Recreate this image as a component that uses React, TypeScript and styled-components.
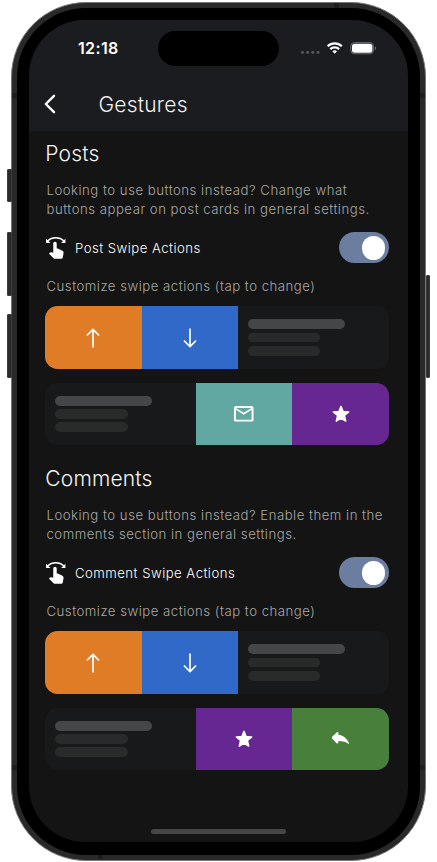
import React from "react";
import styled, { createGlobalStyle } from "styled-components";
import { MdMailOutline } from "react-icons/md";

const GlobalStyle = createGlobalStyle`
  * { box-sizing: border-box; }
  body { margin: 0; background: #fff; font-family: Inter, "Liberation Sans", sans-serif; overflow: hidden; }
`;

const Stage = styled.div`
  width: 437px;
  height: 862px;
  padding: 2px 0 0 11px;
`;

const Phone = styled.div`
  position: relative;
  width: 415px;
  height: 858.5px;
  padding: 5px;
  border: 1px solid #777;
  border-radius: 75px;
  background: #292929;
`;

const SideKey = styled.span<{ $right?: boolean; $top: number; $h: number }>`
  position: absolute;
  ${(p) => (p.$right ? "right: -5px" : "left: -5px")};
  top: ${(p) => p.$top}px;
  width: 4.5px;
  height: ${(p) => p.$h}px;
  background: #2b2b2b;
  border: 1px solid #3b3b3b;
  border-radius: 1px;
`;

const Antenna = styled.span<{ $x: number; $y: number; $flat?: boolean }>`
  position: absolute;
  left: ${(p) => p.$x}px;
  top: ${(p) => p.$y}px;
  width: ${(p) => (p.$flat ? 5 : 6)}px;
  height: 5px;
  background: #1d1d1d;
`;

const Bezel = styled.div`
  position: relative;
  height: 100%;
  padding: 12px;
  border-radius: 69px;
  background: #000;
`;

const Screen = styled.main`
  display: flex;
  flex-direction: column;
  height: 822px;
  border-radius: 56px;
  overflow: hidden;
  background: #141414;
`;

const Header = styled.header`
  height: 110.5px;
  flex: none;
  background: #1b1c1f;
`;

const StatusBar = styled.div`
  display: grid;
  grid-template-columns: 129.3px 120.5px 1fr;
  height: 57px;
  padding-top: 11px;
`;

const Clock = styled.time`
  padding-left: 49px;
  font-size: 16px;
  font-weight: 580;
  letter-spacing: 0.35px;
  line-height: 35px;
  color: #fff;
`;

const Island = styled.div`
  height: 35px;
  border-radius: 18px;
  background: #000;
`;

const Indicators = styled.svg`
  width: 80px;
  height: 16px;
  margin: 9px 0 0 21px;
`;

const NavBar = styled.nav`
  display: flex;
  align-items: center;
  height: 54px;
`;

const BackButton = styled.button`
  display: flex;
  width: 69.5px;
  padding: 0 0 0 14px;
  border: 0;
  background: none;
`;

const PageTitle = styled.h1`
  margin: 0;
  font-size: 21px;
  font-weight: 365;
  letter-spacing: 0.22px;
  color: #f2f2f2;
`;

const Section = styled.section`
  height: 325px;
  flex: none;
  padding: 0 19.2px 0 16.3px;
`;

const SectionTitle = styled.h2`
  margin: 0;
  height: 50.5px;
  line-height: 46px;
  font-size: 21px;
  font-weight: 365;
  letter-spacing: 0.18px;
  color: #f6f6f6;
`;

const Note = styled.p`
  margin: 0 -10px 0 1.2px;
  font-size: 13.2px;
  font-weight: 365;
  line-height: 19.3px;
  letter-spacing: 0.5px;
  white-space: nowrap;
  color: #a8a8a8;
`;

const SettingRow = styled.div`
  display: flex;
  align-items: center;
  height: 57.5px;
  padding-left: 1.2px;
  color: #fff;
`;

const SettingLabel = styled.span`
  flex: 1;
  padding-left: 9px;
  font-size: 13.2px;
  font-weight: 365;
  letter-spacing: 0.46px;
`;

const Toggle = styled.span`
  display: flex;
  justify-content: flex-end;
  width: 50px;
  height: 31px;
  margin-bottom: 1px;
  padding: 3.8px;
  border-radius: 16px;
  background: #6c7e9f;
  &::after {
    content: "";
    width: 23.5px;
    height: 23.5px;
    border-radius: 50%;
    background: #fff;
  }
`;

const SwipeCard = styled.div`
  display: flex;
  height: 62.8px;
  margin-top: 13.6px;
  border-radius: 12.5px;
  overflow: hidden;
  background: #17191a;
`;

const FirstCard = styled(SwipeCard)`
  margin-top: 9.8px;
`;

const Action = styled.button<{ $color: string }>`
  display: flex;
  align-items: center;
  justify-content: center;
  flex: none;
  width: 96.4px;
  padding: 0;
  border: 0;
  background: ${(p) => p.$color};
  color: #fff;
`;

const Preview = styled.div`
  display: flex;
  flex-direction: column;
  gap: 3.6px;
  flex: 1;
  padding: 13.2px 10px;
`;

const Bar = styled.span<{ $strong?: boolean }>`
  width: ${(p) => (p.$strong ? 96.5 : 72.3)}px;
  height: 9.8px;
  border-radius: 5px;
  background: ${(p) => (p.$strong ? "#454648" : "#292b2a")};
`;

const HomeIndicator = styled.div`
  width: 135.5px;
  height: 5px;
  margin: 48px auto 0;
  border-radius: 3px;
  background: #464646;
`;

const Arrow = ({ down }: { down?: boolean }) => (
  <svg width="24" height="24" viewBox="0 0 24 24" fill="none" stroke="currentColor" strokeWidth="1.7" strokeLinecap="round" strokeLinejoin="round">
    <path d={down ? "M12 3.2v17.2M6.4 15l5.6 5.6 5.6-5.6" : "M12 20.8V3.6M6.4 9l5.6-5.6 5.6 5.6"} />
  </svg>
);

const Star = () => (
  <svg width="24" height="24" viewBox="0 0 24 24" fill="currentColor" stroke="currentColor" strokeWidth="1.5" strokeLinejoin="round">
    <path d="M12 4.4l2.1 5.1 5.6.4-4.3 3.6 1.3 5.6-4.7-3-4.7 3 1.3-5.6-4.3-3.6 5.6-.4z" />
  </svg>
);

const Reply = () => (
  <svg width="17.5" height="13" viewBox="0 0 51 38" fill="currentColor">
    <path d="M1 13.5L13.5 1.2C15.5-.6 18.5.4 18.5 3.2V8C35 10 46 21 51 37C43 28.5 33 26 18.5 26V31C18.5 33.8 15.5 34.6 13.5 32.7L1 20C-.8 18-.8 15.3 1 13.5z" />
  </svg>
);

const SwipeHand = () => (
  <svg width="19.5" height="22" viewBox="0 0 58 66" fill="currentColor">
    <path d="M4 12C18-1 40-1 54 12" fill="none" stroke="currentColor" strokeWidth="3.8" />
    <path d="M0 5V18H13zM58 5V18H45z" />
    <path d="M21.5 19.5a5.2 5.2 0 0 1 10.4 0V34.5H35L49 41.3Q53 43.5 52.4 48L50.3 61Q49.5 65.5 45 65.5H27.5Q24.5 65.5 22.3 63.4L8.5 49.5L11 47Q12.8 45.3 15 45.8L21.5 47.3z" />
  </svg>
);

type ActionKind = "up" | "down" | "mail" | "star" | "reply";

const actions: Record<ActionKind, { color: string; label: string; icon: React.ReactNode }> = {
  up: { color: "#e17c26", label: "Upvote", icon: <Arrow /> },
  down: { color: "#3069c8", label: "Downvote", icon: <Arrow down /> },
  mail: { color: "#60a8a1", label: "Mark read", icon: <MdMailOutline size={23.5} /> },
  star: { color: "#662792", label: "Save", icon: <Star /> },
  reply: { color: "#48803b", label: "Reply", icon: <Reply /> },
};

const ActionButton = ({ kind }: { kind: ActionKind }) => (
  <Action $color={actions[kind].color} aria-label={actions[kind].label}>
    {actions[kind].icon}
  </Action>
);

const PreviewLines = () => (
  <Preview>
    <Bar $strong />
    <Bar />
    <Bar />
  </Preview>
);

interface GestureSectionProps {
  title: string;
  note: [string, string];
  label: string;
  right: [ActionKind, ActionKind];
}

const GestureSection = ({ title, note, label, right }: GestureSectionProps) => (
  <Section>
    <SectionTitle>{title}</SectionTitle>
    <Note>
      {note[0]}
      <br />
      {note[1]}
    </Note>
    <SettingRow>
      <SwipeHand />
      <SettingLabel>{label}</SettingLabel>
      <Toggle role="switch" aria-checked="true" />
    </SettingRow>
    <Note>Customize swipe actions (tap to change)</Note>
    <FirstCard>
      <ActionButton kind="up" />
      <ActionButton kind="down" />
      <PreviewLines />
    </FirstCard>
    <SwipeCard>
      <PreviewLines />
      <ActionButton kind={right[0]} />
      <ActionButton kind={right[1]} />
    </SwipeCard>
  </Section>
);

export default function App() {
  return (
    <Stage>
      <GlobalStyle />
      <Phone>
        <SideKey $top={166} $h={33} />
        <SideKey $top={229} $h={64} />
        <SideKey $top={311} $h={64} />
        <SideKey $right $top={272} $h={103} />
        <Antenna $x={0} $y={90} />
        <Antenna $x={407} $y={90} />
        <Antenna $x={0} $y={762} />
        <Antenna $x={407} $y={762} />
        <Antenna $x={322} $y={0} $flat />
        <Antenna $x={86} $y={851} $flat />
        <Bezel>
          <Screen>
            <Header>
              <StatusBar>
                <Clock>12:18</Clock>
                <Island />
                <Indicators viewBox="0 0 80 16">
                  <g fill="#505154">
                    <circle cx="2.5" cy="12.3" r="1.6" />
                    <circle cx="7.6" cy="12.3" r="1.6" />
                    <circle cx="12.8" cy="12.3" r="1.6" />
                    <circle cx="18" cy="12.3" r="1.6" />
                  </g>
                  <g fill="none" stroke="#fff" strokeWidth="2.2">
                    <path d="M27.6 6.2a10.3 10.3 0 0 1 14.2 0" />
                    <path d="M30.3 9.1a6.3 6.3 0 0 1 8.8 0" />
                  </g>
                  <path d="M34.7 13.7l-2.3-2.4a3.4 3.4 0 0 1 4.6 0z" fill="#fff" />
                  <rect x="50.8" y="2.6" width="22.8" height="11.2" rx="3.6" fill="none" stroke="#6b6c6e" />
                  <rect x="52" y="3.8" width="20.4" height="8.9" rx="2.5" fill="#fff" />
                  <path d="M75 6.4c1.6.6 1.6 3 0 3.6z" fill="#77787a" />
                </Indicators>
              </StatusBar>
              <NavBar>
                <BackButton aria-label="Back">
                  <svg width="16" height="22" viewBox="0 0 16 22" fill="none" stroke="#fff" strokeWidth="2.4" strokeLinecap="round" strokeLinejoin="round">
                    <path d="M11 2.8L2.8 11l8.2 8.2" />
                  </svg>
                </BackButton>
                <PageTitle>Gestures</PageTitle>
              </NavBar>
            </Header>
            <GestureSection
              title="Posts"
              note={["Looking to use buttons instead? Change what", "buttons appear on post cards in general settings."]}
              label="Post Swipe Actions"
              right={["mail", "star"]}
            />
            <GestureSection
              title="Comments"
              note={["Looking to use buttons instead? Enable them in the", "comments section in general settings."]}
              label="Comment Swipe Actions"
              right={["star", "reply"]}
            />
            <HomeIndicator />
          </Screen>
        </Bezel>
      </Phone>
    </Stage>
  );
}
